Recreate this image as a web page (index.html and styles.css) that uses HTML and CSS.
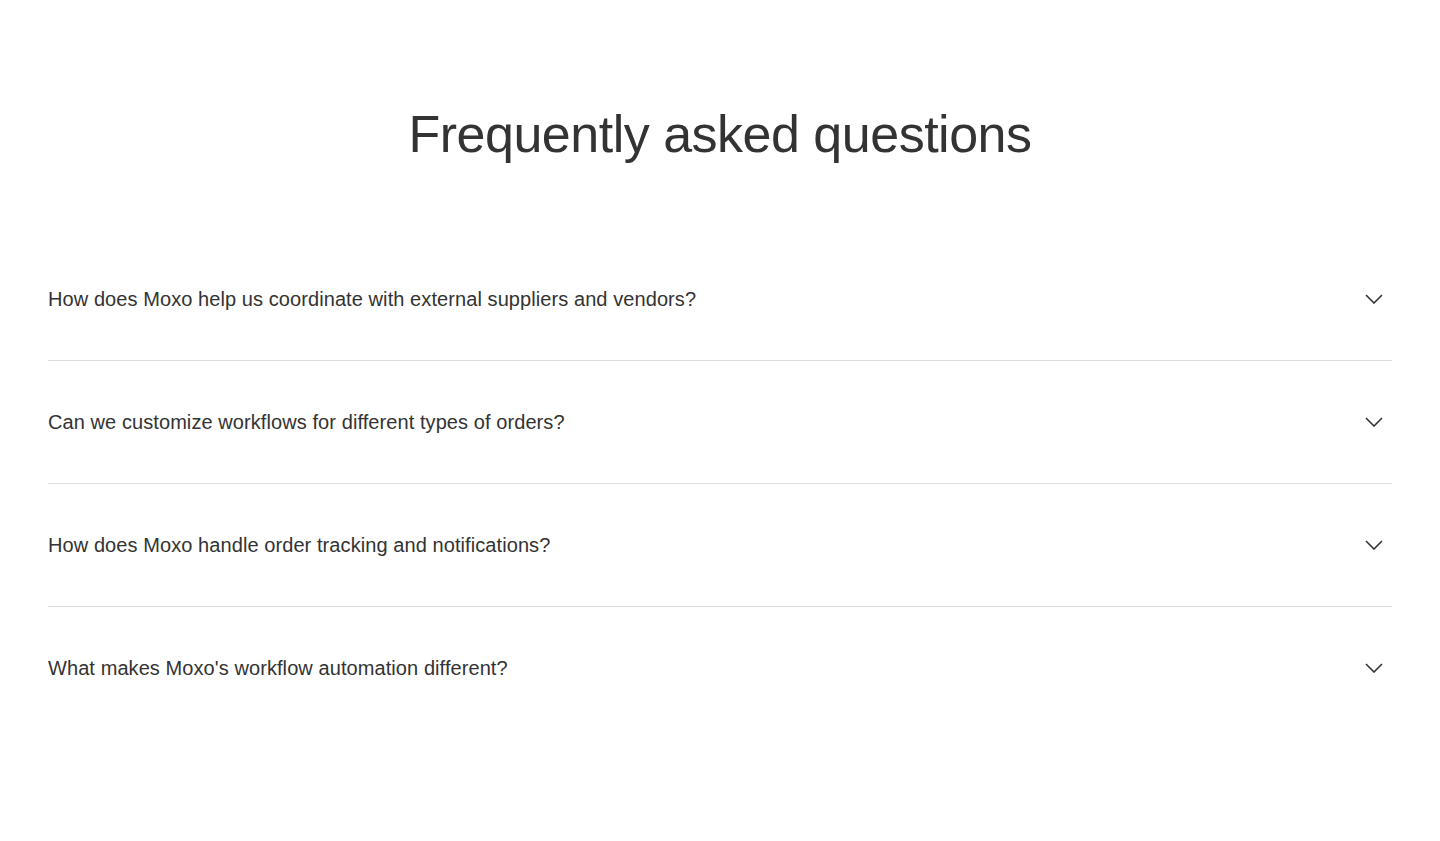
FILE: index.html
```html
<!DOCTYPE html>
<html lang="en">
<head>
    <meta charset="UTF-8">
    <meta name="viewport" content="width=device-width, initial-scale=1.0">
    <title>Frequently asked questions</title>
    <link rel="stylesheet" href="styles.css">
</head>
<body>
    <section class="faq">
        <h2 class="faq-title">Frequently asked questions</h2>

        <div class="faq-list">
            <div class="faq-item">
                <span class="faq-question">How does Moxo help us coordinate with external suppliers and vendors?</span>
                <svg class="faq-chevron" width="18" height="10" viewBox="0 0 18 10"><path d="M1 1l8 8 8-8"/></svg>
            </div>
            <div class="faq-item">
                <span class="faq-question">Can we customize workflows for different types of orders?</span>
                <svg class="faq-chevron" width="18" height="10" viewBox="0 0 18 10"><path d="M1 1l8 8 8-8"/></svg>
            </div>
            <div class="faq-item">
                <span class="faq-question">How does Moxo handle order tracking and notifications?</span>
                <svg class="faq-chevron" width="18" height="10" viewBox="0 0 18 10"><path d="M1 1l8 8 8-8"/></svg>
            </div>
            <div class="faq-item">
                <span class="faq-question">What makes Moxo's workflow automation different?</span>
                <svg class="faq-chevron" width="18" height="10" viewBox="0 0 18 10"><path d="M1 1l8 8 8-8"/></svg>
            </div>
        </div>
    </section>
</body>
</html>
```

FILE: styles.css
```css
body {
    margin: 0;
    background: #fff;
    color: #333;
    font-family: "Liberation Sans", Arial, sans-serif;
}

.faq {
    padding: 96px 48px 80px;
}

.faq-title {
    margin: 0;
    text-align: center;
    font-size: 52px;
    line-height: 76px;
    font-weight: 400;
    letter-spacing: -0.5px;
    color: #333;
}

.faq-list {
    margin-top: 66px;
}

.faq-item {
    display: flex;
    align-items: center;
    justify-content: space-between;
    padding: 48px 0;
    border-bottom: 1px solid #ddd;
}

.faq-item:last-child {
    border-bottom: none;
}

.faq-question {
    font-size: 20px;
    line-height: 26px;
    letter-spacing: 0.08px;
}

.faq-chevron {
    margin-right: 9px;
    fill: none;
    stroke: #333;
    stroke-width: 1.6;
}
```
